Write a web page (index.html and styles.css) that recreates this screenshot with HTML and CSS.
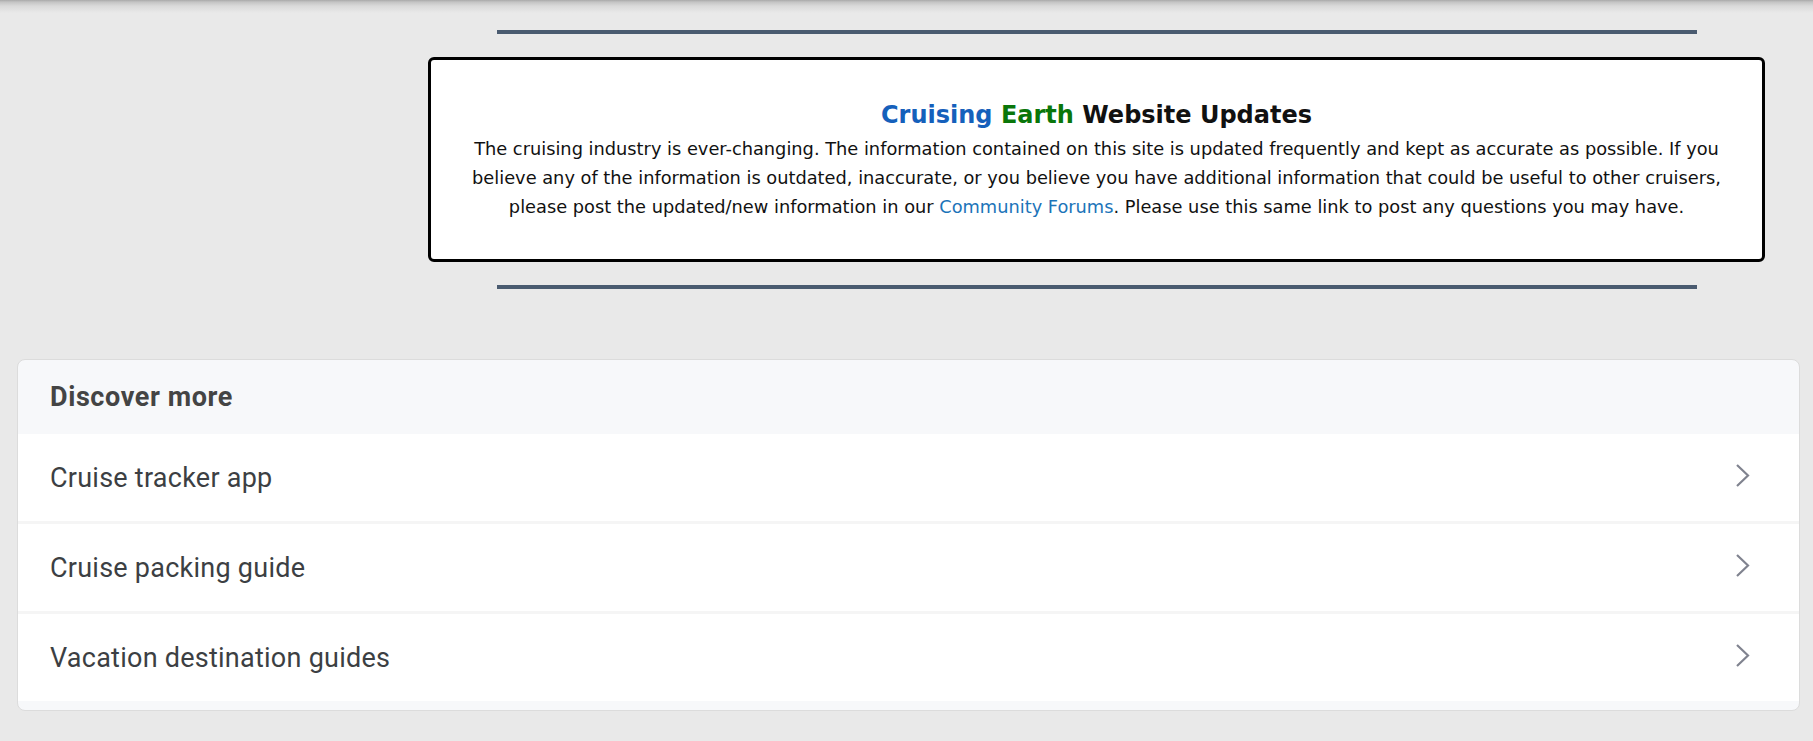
FILE: index.html
```html
<!DOCTYPE html>
<html lang="en">
<head>
    <meta charset="UTF-8">
    <meta name="viewport" content="width=device-width, initial-scale=1.0">
    <title>Cruising Earth</title>
    <link rel="stylesheet" href="styles.css">
</head>
<body>
    <div class="top-shade"></div>
    <div class="page">
        <div class="updates">
            <div class="rule"></div>
            <div class="notice">
                <h3 class="notice-title">
                    <span class="brand-cruising">Cruising</span>
                    <span class="brand-earth">Earth</span>
                    Website Updates
                </h3>
                <p class="notice-text">
                    The cruising industry is ever-changing. The information contained on this site is updated frequently and kept as accurate as possible. If you believe any of the information is outdated, inaccurate, or you believe you have additional information that could be useful to other cruisers, please post the updated/new information in our <a href="#">Community Forums</a>. Please use this same link to post any questions you may have.
                </p>
            </div>
            <div class="rule"></div>
        </div>

        <div class="discover">
            <div class="discover-header">Discover more</div>
            <a class="discover-item" href="#">
                <span>Cruise tracker app</span>
                <svg class="chevron" width="15" height="23" viewBox="0 0 15 23"><polyline points="2,1 13,11.5 2,22" /></svg>
            </a>
            <a class="discover-item" href="#">
                <span>Cruise packing guide</span>
                <svg class="chevron" width="15" height="23" viewBox="0 0 15 23"><polyline points="2,1 13,11.5 2,22" /></svg>
            </a>
            <a class="discover-item" href="#">
                <span>Vacation destination guides</span>
                <svg class="chevron" width="15" height="23" viewBox="0 0 15 23"><polyline points="2,1 13,11.5 2,22" /></svg>
            </a>
            <div class="discover-footer"></div>
        </div>
    </div>
</body>
</html>
```

FILE: styles.css
```css
body {
    margin: 0;
    padding: 0;
    background-color: #e9e9e9;
    font-family: "DejaVu Sans", Verdana, sans-serif;
    color: #111;
}

/* shadow left by the header above */
.top-shade {
    height: 13px;
    background: linear-gradient(to bottom, #a9a9a9 0px, #c4c4c4 2px, #dadada 6px, #e9e9e9 13px);
}

.page {
    padding: 17px 13px 30px 17px;
}

.updates {
    margin-left: 411px;
    margin-right: 35px;
}

.rule {
    width: 1200px;
    height: 4px;
    margin: 0 auto;
    background-color: #4a5b70;
}

.notice {
    margin: 23px 0;
    padding: 40px 20px 38px;
    background-color: #fff;
    border: 3px solid #000;
    border-radius: 6px;
    text-align: center;
}

.notice-title {
    margin: 0 0 4px;
    font-size: 24px;
    font-weight: bold;
    line-height: 30px;
    color: #111;
}

.brand-cruising {
    color: #1560bb;
}

.brand-earth {
    color: #0a760a;
}

.notice-text {
    margin: 0;
    font-size: 17.8px;
    line-height: 29px;
}

.notice-text a {
    color: #1c74b9;
    text-decoration: none;
}

.discover {
    margin-top: 70px;
    background-color: #f7f8fa;
    border: 1px solid #dcdcdc;
    border-radius: 8px;
    overflow: hidden;
    font-family: Roboto, "Noto Sans", sans-serif;
}

.discover-header {
    height: 74px;
    display: flex;
    align-items: center;
    padding: 0 32px;
    font-size: 27px;
    font-weight: bold;
    letter-spacing: 0.6px;
    color: #444;
}

.discover-item {
    height: 90px;
    display: flex;
    align-items: center;
    justify-content: space-between;
    padding: 0 49px 4px 32px;
    box-sizing: border-box;
    background-color: #fff;
    border-bottom: 3px solid #f5f5f5;
    color: #3c3f43;
    text-decoration: none;
    font-size: 27px;
    letter-spacing: 0.25px;
}

.discover-item:last-of-type {
    height: 87px;
    border-bottom: none;
}

.discover-item span {
    padding-top: 4px;
}

.chevron polyline {
    fill: none;
    stroke: #80838f;
    stroke-width: 2.2;
}

.discover-footer {
    height: 9px;
}
```
